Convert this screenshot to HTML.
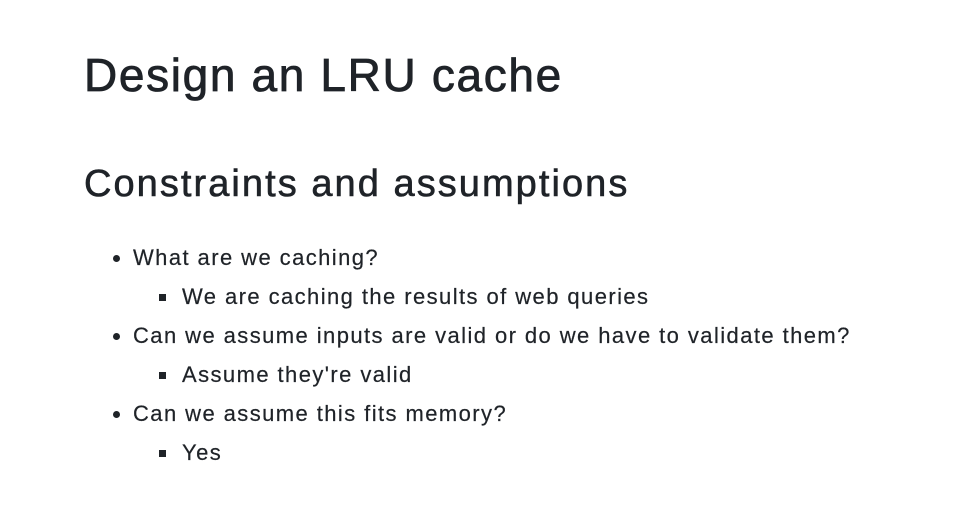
<!DOCTYPE html>
<html><head><style>
body{margin:0;background:#fff;color:#1f2328;font-family:"Liberation Sans",sans-serif;width:979px;height:526px;overflow:hidden}
h1{position:absolute;left:84px;top:47px;margin:0;font-size:46px;font-weight:normal;line-height:56px;letter-spacing:1.65px;-webkit-text-stroke:0.8px #1f2328}
h2{position:absolute;left:84px;top:160px;margin:0;font-size:38px;font-weight:normal;line-height:48px;letter-spacing:2.05px;-webkit-text-stroke:0.6px #1f2328}
.t{position:absolute;font-size:22px;line-height:26px;white-space:nowrap;letter-spacing:1.42px;-webkit-text-stroke:0.2px #1f2328}
.b{position:absolute;width:7px;height:7px;border-radius:50%;background:#1f2328}
.s{position:absolute;width:7px;height:7px;background:#1f2328}
</style></head><body>
<h1>Design an LRU cache</h1>
<h2>Constraints and assumptions</h2>
<div class="b" style="left:113px;top:255px"></div><div class="t" style="left:133px;top:245px">What are we caching?</div>
<div class="s" style="left:159px;top:294px"></div><div class="t" style="left:182px;top:284px">We are caching the results of web queries</div>
<div class="b" style="left:113px;top:333px"></div><div class="t" style="left:133px;top:323px">Can we assume inputs are valid or do we have to validate them?</div>
<div class="s" style="left:159px;top:372px"></div><div class="t" style="left:182px;top:362px">Assume they're valid</div>
<div class="b" style="left:113px;top:411px"></div><div class="t" style="left:133px;top:401px">Can we assume this fits memory?</div>
<div class="s" style="left:159px;top:450px"></div><div class="t" style="left:182px;top:440px">Yes</div>
</body></html>
